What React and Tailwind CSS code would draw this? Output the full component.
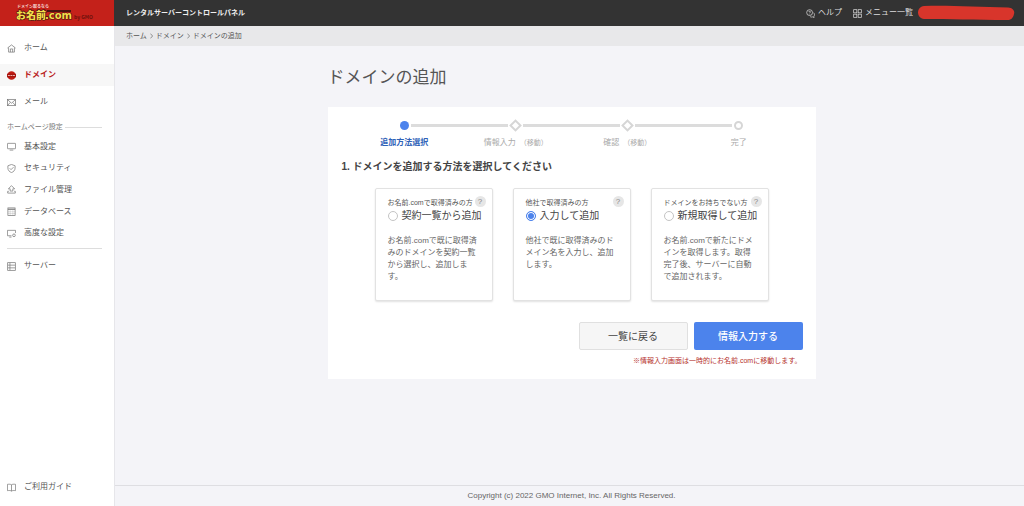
import React, { useState } from "react";

const MAIN_MENU = [
  { label: "ホーム", icon: "home" },
  { label: "ドメイン", icon: "domain", active: true },
  { label: "メール", icon: "mail" },
];

const SITE_MENU = [
  { label: "基本設定", icon: "monitor" },
  { label: "セキュリティ", icon: "shield" },
  { label: "ファイル管理", icon: "upload" },
  { label: "データベース", icon: "database" },
  { label: "高度な設定", icon: "advanced" },
];

const STEPS = [
  { label: "追加方法選択", mark: "dot" },
  { label: "情報入力", note: "（移動）", mark: "diamond" },
  { label: "確認", note: "（移動）", mark: "diamond" },
  { label: "完了", mark: "ring" },
];

const METHODS = [
  {
    id: "contract",
    target: "お名前.comで取得済みの方",
    title: "契約一覧から追加",
    text: "お名前.comで既に取得済みのドメインを契約一覧から選択し、追加します。",
  },
  {
    id: "input",
    target: "他社で取得済みの方",
    title: "入力して追加",
    text: "他社で既に取得済みのドメイン名を入力し、追加します。",
  },
  {
    id: "new",
    target: "ドメインをお持ちでない方",
    title: "新規取得して追加",
    text: "お名前.comで新たにドメインを取得します。取得完了後、サーバーに自動で追加されます。",
  },
];

const ICONS = {
  home: (
    <>
      <path d="M1 9 L10 2 L19 9" />
      <path d="M3.5 8 V18 H16.5 V8" />
      <path d="M7.5 18 V11 H12.5 V18" />
    </>
  ),
  mail: (
    <>
      <rect x="1" y="3" width="18" height="14" />
      <path d="M1.5 4 L10 11.5 L18.5 4 M1.5 16.5 L7 10 M18.5 16.5 L13 10" />
    </>
  ),
  monitor: (
    <>
      <rect x="1" y="3" width="18" height="12" rx="1" />
      <path d="M6 18 H14" />
    </>
  ),
  shield: (
    <>
      <path d="M10 1 L18 4 V9 C18 14 14.5 17.5 10 19 C5.5 17.5 2 14 2 9 V4 Z" />
      <path d="M6 9.5 L9 12.5 L14.5 7" />
    </>
  ),
  upload: (
    <>
      <path d="M10 1.5 L17 8.5 H13 V13.5 H7 V8.5 H3 Z" />
      <path d="M4 14 H1.5 V18 H18.5 V14 H16" />
    </>
  ),
  database: (
    <>
      <rect x="2" y="2" width="16" height="17" />
      <path d="M2 5 H18" strokeWidth="2.5" />
      <path d="M2 10.5 H18 M2 14.5 H18 M7 7 V19 M13 7 V19" strokeOpacity="0.3" />
    </>
  ),
  advanced: (
    <>
      <path d="M10 15 H1 V3 H19 V9" />
      <path d="M5 18 H10" />
      <circle cx="15.5" cy="14" r="3" />
    </>
  ),
  server: (
    <>
      <rect x="1.5" y="1.5" width="17" height="17" />
      <path d="M2 7 H18 M2 13 H18 M6.5 2 V18" />
    </>
  ),
  guide: (
    <>
      <path d="M10 4 C8 2.5 5 2.5 1 3 V17 C5 16.5 8 16.5 10 18 C12 16.5 15 16.5 19 17 V3 C15 2.5 12 2.5 10 4 Z" />
      <path d="M10 4 V18" />
    </>
  ),
  help: (
    <>
      <circle cx="8" cy="8" r="6.5" />
      <path d="M6 6.5 C6 4.5 10 4.5 10 6.5 C10 8 8 8 8 9.5 M8 11 V12" />
      <path d="M16.5 8 C20 11 19 15 17.5 16 L18 19 L15 17.5 C12 18.5 10 17.5 9 16.5" />
    </>
  ),
  grid: (
    <>
      <rect x="1.5" y="1.5" width="7" height="7" />
      <rect x="11.5" y="1.5" width="7" height="7" />
      <rect x="1.5" y="11.5" width="7" height="7" />
      <rect x="11.5" y="11.5" width="7" height="7" />
    </>
  ),
};

function Icon({ name, className }) {
  if (name === "domain") {
    return (
      <svg viewBox="0 0 20 20" className={className}>
        <circle cx="10" cy="10" r="9.5" fill="#c01c14" />
        <rect x="0" y="6" width="20" height="8" fill="#a8140e" />
        <path d="M2 10 H18" stroke="#e9b5b1" strokeWidth="2.6" strokeDasharray="4.4 1.2" />
      </svg>
    );
  }
  return (
    <svg viewBox="0 0 20 20" fill="none" stroke="currentColor" strokeWidth="1.6" className={className}>
      {ICONS[name]}
    </svg>
  );
}

function MenuLink({ item, className }) {
  return (
    <a
      href="#"
      className={`flex items-center gap-2 pl-[7px] text-[8px] leading-3 ${
        item.active ? "bg-[#f7f7f7] font-bold text-[#b8201a]" : "text-[#555]"
      } ${className}`}
    >
      <Icon name={item.icon} className={`size-[9px] shrink-0 ${item.active ? "" : "text-[#777]"}`} />
      {item.label}
    </a>
  );
}

function Logo() {
  return (
    <a href="#" aria-label="お名前.com" className="block h-full w-[114px] shrink-0 bg-[#c4211a]">
      <svg viewBox="0 0 114 26" className="h-full w-full font-['Noto_Sans_CJK_JP',sans-serif]">
        <text x="17" y="8" fontSize="4" fontWeight="700" fill="#f6d9d6">ドメイン取るなら</text>
        <rect x="47" y="10" width="24" height="2" fill="#4a1410" />
        <g fontWeight="900" stroke="#4a1410" strokeWidth="1.2" paintOrder="stroke" fill="#f3de4b">
          <text x="16" y="19" fontSize="10">お名前</text>
          <text x="45" y="19" fontSize="10" className="font-['DejaVu_Sans',sans-serif]">.com</text>
        </g>
        <text x="74" y="19" fontSize="5" fontWeight="700" fill="#6e120d">by GMO</text>
      </svg>
    </a>
  );
}

function Chevron() {
  return (
    <svg viewBox="0 0 3 6" className="h-[6px] w-[3px]" fill="none" stroke="#777" strokeWidth="0.8">
      <path d="M0.4 0.6 L2.6 3 L0.4 5.4" />
    </svg>
  );
}

function StepMark({ mark }) {
  if (mark === "dot") return <span className="mx-[2px] size-[9px] rounded-full bg-[#4c83ec]" />;
  if (mark === "ring") return <span className="mx-[2px] size-[9px] rounded-full border-2 border-[#d6d6d6]" />;
  return <span className="mx-[3px] size-[9px] rotate-45 border-2 border-[#d6d6d6]" />;
}

function Steps() {
  return (
    <ol className="grid grid-cols-4 px-[21px]">
      {STEPS.map((step, i) => (
        <li key={step.label}>
          <div className="flex h-3 items-center">
            <span className={`h-[3px] flex-1 ${i === 0 ? "" : "bg-[#dcdcdc]"}`} />
            <StepMark mark={step.mark} />
            <span className={`h-[3px] flex-1 ${i === STEPS.length - 1 ? "" : "bg-[#dcdcdc]"}`} />
          </div>
          <p
            className={`mt-[6px] text-center text-[8px] leading-3 ${
              i === 0 ? "font-bold text-[#2f62b8]" : "text-[#aaa]"
            }`}
          >
            {step.label}
            {step.note && <span className="ml-1 text-[7px]">{step.note}</span>}
          </p>
        </li>
      ))}
    </ol>
  );
}

function MethodCard({ method, checked, onSelect }) {
  return (
    <div className="relative min-h-[113px] rounded-[2px] border border-[#e2e2e2] bg-white px-3 pt-2 pb-4 shadow-[0_1px_2px_rgba(0,0,0,0.12)]">
      <button
        type="button"
        aria-label="ヘルプ"
        className="absolute top-[7px] right-[6px] size-[11px] rounded-full bg-[#e6e6e6] text-center text-[8px] leading-[11px] text-[#888]"
      >
        ?
      </button>
      <label htmlFor={method.id} className="block">
        <span className="block text-[7px] leading-3 whitespace-nowrap text-[#555]">{method.target}</span>
        <span className="flex items-center gap-1 text-[10px] leading-[14px] whitespace-nowrap text-[#444]">
          <input
            id={method.id}
            type="radio"
            name="method"
            checked={checked}
            onChange={onSelect}
            className="size-[10px] shrink-0 appearance-none rounded-full border border-[#c4c4c4] bg-white checked:border-[#4c83ec] checked:bg-[#4c83ec] checked:shadow-[inset_0_0_0_1px_#fff]"
          />
          {method.title}
        </span>
      </label>
      <p className="mt-3 text-[8px] leading-3 text-[#666]">{method.text}</p>
    </div>
  );
}

function App() {
  const [method, setMethod] = useState("input");

  return (
    <div lang="ja" className="flex min-h-screen flex-col bg-[#f4f4f8] font-['Liberation_Sans','Noto_Sans_CJK_JP',sans-serif] text-[#444]">
      {/* HEADER */}
      <header className="flex h-[26px] items-center bg-[#333] text-[#ddd]">
        <Logo />
        <h1 className="ml-3 text-[7px] leading-3 font-bold text-[#eee]">レンタルサーバーコントロールパネル</h1>
        <nav className="ml-auto flex items-center gap-[11px] text-[8px] leading-3">
          <a href="#" className="flex items-center gap-[3px]">
            <Icon name="help" className="size-[9px]" />
            ヘルプ
          </a>
          <a href="#" className="flex items-center gap-[3px]">
            <Icon name="grid" className="size-[9px]" />
            メニュー一覧
          </a>
        </nav>
        <svg viewBox="0 0 98 16" className="mr-[9px] ml-1 h-4 w-[98px]">
          <path d="M7 1 C30 0 60 2 91 2.500 C96 3 98 6 97 9 C96 14 93 15.500 89 15 C60 15 30 14 7 14 C-1 13 -1 2 7 1 Z" fill="#d8352b" />
        </svg>
      </header>

      <div className="flex flex-1">
        {/* SIDEBAR */}
        <aside className="flex w-[114px] shrink-0 flex-col bg-white pt-[11px] pb-2">
          <nav>
            <div className="flex flex-col gap-[5px]">
              {MAIN_MENU.map((item) => (
                <MenuLink key={item.label} item={item} className="h-[22px]" />
              ))}
            </div>
            <div className="mt-2 mr-3 ml-[7px] flex items-center gap-[2px] text-[7px] leading-3 text-[#777]">
              ホームページ設定
              <span className="h-px flex-1 bg-[#ddd]" />
            </div>
            <div className="mt-[3px] flex h-[108px] flex-col">
              {SITE_MENU.map((item) => (
                <MenuLink key={item.label} item={item} className="flex-1" />
              ))}
            </div>
            <hr className="mt-1 mr-3 mb-[6px] ml-[7px] border-[#ddd]" />
            <MenuLink item={{ label: "サーバー", icon: "server" }} className="h-[22px]" />
          </nav>
          <MenuLink item={{ label: "ご利用ガイド", icon: "guide" }} className="mt-auto h-[22px]" />
        </aside>

        <div className="flex min-w-0 flex-1 flex-col border-l border-[#e6e6ea]">
          <nav className="flex h-5 items-center gap-[3px] bg-[#e8e8ea] pl-[11px] text-[7px] leading-3 text-[#555]">
            <a href="#">ホーム</a>
            <Chevron />
            <a href="#">ドメイン</a>
            <Chevron />
            <span>ドメインの追加</span>
          </nav>

          <main className="flex-1 pt-5 pr-3 pl-4">
            <div className="mx-auto max-w-[488px]">
              <h2 className="text-[17px] leading-6 text-[#555]">ドメインの追加</h2>

              <section className="mt-[17px] bg-white pt-3 pb-3">
                <Steps />
                <h3 className="mt-[10px] px-[14px] text-[10px] leading-4 font-bold text-[#444]">
                  1. ドメインを追加する方法を選択してください
                </h3>

                <div className="mt-[13px] grid grid-cols-3 gap-5 px-[47px]">
                  {METHODS.map((m) => (
                    <MethodCard key={m.id} method={m} checked={method === m.id} onSelect={() => setMethod(m.id)} />
                  ))}
                </div>

                <div className="mt-[21px] flex justify-end gap-[6px] px-[13px]">
                  <button type="button" className="h-7 w-[109px] rounded-[2px] border border-[#e0e0e0] bg-[#f6f6f6] text-[10px] text-[#444]">
                    一覧に戻る
                  </button>
                  <button type="button" className="h-7 w-[109px] rounded-[2px] bg-[#4c83ec] text-[10px] font-medium text-white">
                    情報入力する
                  </button>
                </div>
                <p className="mt-[5px] px-[14px] text-right text-[7px] leading-3 text-[#b5302c]">
                  ※情報入力画面は一時的にお名前.comに移動します。
                </p>
              </section>
            </div>
          </main>

          <footer className="border-t border-[#dedee2] py-1 pr-3 pl-4 text-center text-[8px] leading-3 text-[#666]">
            Copyright (c) 2022 GMO Internet, Inc. All Rights Reserved.
          </footer>
        </div>
      </div>
    </div>
  );
}

export default App;
